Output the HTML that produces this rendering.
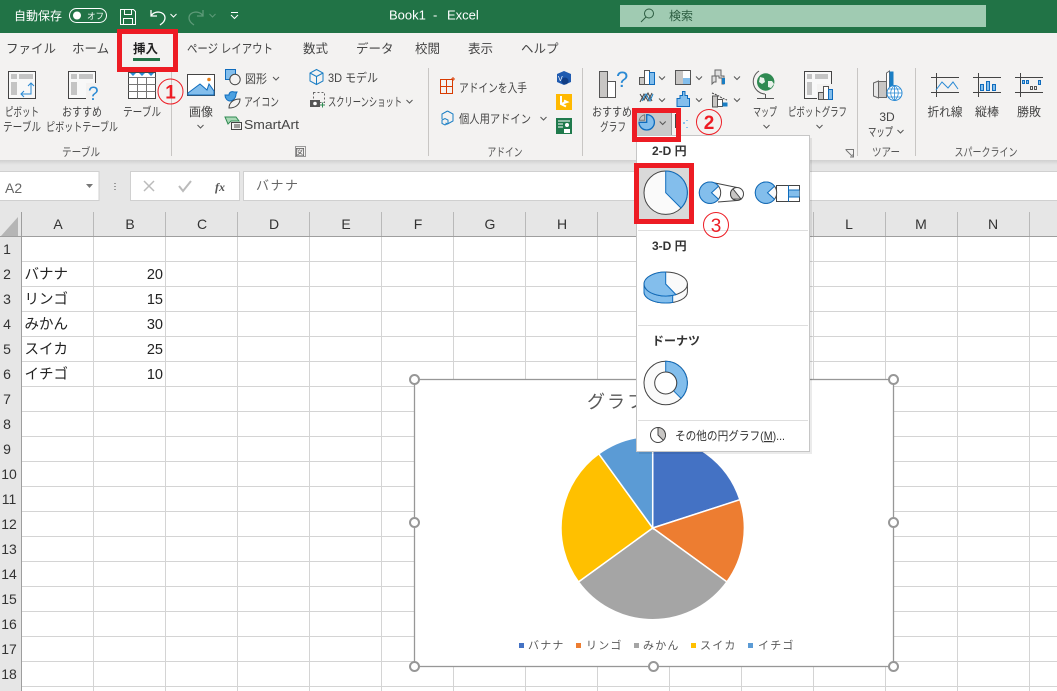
<!DOCTYPE html>
<html lang="ja"><head><meta charset="utf-8"><title>Book1 - Excel</title>
<style>
html,body{margin:0;padding:0;background:#fff;overflow:hidden}
svg{display:block;font-family:"Liberation Sans","Noto Sans CJK JP",sans-serif}
.t{font-size:12px;fill:#444}
.c{font-size:12px;fill:#444;text-anchor:middle}
.s{font-size:11.5px;fill:#555;text-anchor:middle}
.tab{font-size:12.5px;fill:#444}
.h{font-size:14px;fill:#333;text-anchor:middle}
.cell{font-size:14.5px;fill:#222}
.num{font-size:14.5px;fill:#222;text-anchor:end}
.lg{font-size:11px;fill:#595959;letter-spacing:1.2px}
.g{fill:none;stroke:#d4d4d4;stroke-width:1}
.chev{fill:none;stroke:#555;stroke-width:1}
.hd{fill:#fff;stroke:#979797;stroke-width:2}
.ic{fill:#fff;stroke:#444;stroke-width:1}
.gy{fill:#c8c6c4;stroke:#555;stroke-width:1}
.bl{fill:#83beec;stroke:#0f6cbd;stroke-width:1}
.red{fill:none;stroke:#ed1c24;stroke-width:5}
.rc{fill:none;stroke:#ed1c24;stroke-width:1}
.m{font-size:12px;font-weight:bold;fill:#333}
</style></head><body>
<svg width="1057" height="691" viewBox="0 0 1057 691" xmlns="http://www.w3.org/2000/svg">
<defs><linearGradient id="sh" x1="0" y1="0" x2="0" y2="1"><stop offset="0" stop-color="#d0d0d0"/><stop offset="1" stop-color="#e6e6e6"/></linearGradient></defs>

<!-- title bar -->
<rect width="1057" height="33" fill="#217346"/>
<text x="14" y="20" font-size="12" fill="#fff">自動保存</text>
<rect x="69.500" y="8.500" width="37" height="14" rx="7" fill="none" stroke="#fff"/>
<circle cx="77" cy="15.500" r="4" fill="#fff"/>
<text x="87" y="19" font-size="8.500" fill="#fff">オフ</text>
<g fill="none" stroke="#fff" stroke-width="1"><path d="M120.500 9.500h13l2 2v13h-15zM124.500 9.500v5h7v-5M123.500 24.500v-6h9v6"/></g>
<path d="M151 10v6h6M151 16c3-6 14-5 14 2 0 3-2 5-5 7" fill="none" stroke="#fff" stroke-width="1.300"/>
<path d="M170.500 14l3 3 3-3" fill="none" stroke="#fff"/>
<path d="M203 10v6h-6M203 16c-3-6-14-5-14 2 0 3 2 5 5 7" fill="none" stroke="#5d9a78" stroke-width="1.300"/>
<path d="M209.500 14l3 3 3-3" fill="none" stroke="#5d9a78"/>
<path d="M231 12.500h7M231 15l3.500 3.500 3.500-3.500" fill="none" stroke="#fff"/>
<text x="389" y="19.500" font-size="13" fill="#fff">Book1</text><text x="433" y="19.500" font-size="13" fill="#fff">-</text><text x="447" y="19.500" font-size="13" fill="#fff">Excel</text>
<rect x="620" y="5" width="366" height="22" fill="#a0cbb2"/>
<circle cx="649" cy="13.500" r="4.500" fill="none" stroke="#2b5c40"/><path d="M646 17l-5 5" stroke="#2b5c40" fill="none"/>
<text x="669" y="20" font-size="12" fill="#2b5c40">検索</text>

<!-- ribbon -->
<rect y="33" width="1057" height="127" fill="#f3f2f1"/>
<rect y="160" width="1057" height="52" fill="#e6e6e6"/>
<rect y="160" width="1057" height="5" fill="url(#sh)"/>
<text class="tab" x="6" y="53">ファイル</text>
<text class="tab" x="72" y="53">ホーム</text>
<text class="tab" x="133" y="53" font-weight="bold" style="fill:#222">挿入</text>
<rect x="133" y="58" width="27" height="3" fill="#217346"/>
<text class="tab" x="187" y="53" textLength="86" lengthAdjust="spacingAndGlyphs">ページ レイアウト</text>
<text class="tab" x="303" y="53">数式</text>
<text class="tab" x="356" y="53">データ</text>
<text class="tab" x="415" y="53">校閲</text>
<text class="tab" x="468" y="53">表示</text>
<text class="tab" x="521" y="53">ヘルプ</text>

<g stroke="#c8c6c4" stroke-width="1"><path d="M171.500 68v88M428.500 68v88M582.500 68v88M857.500 68v88M915.500 68v88"/></g>

<!-- table group -->
<rect class="ic" x="8.500" y="71.500" width="27" height="27" style="fill:#f8f8f8"/>
<path fill="#c4c4c4" d="M11 74h6v5h-6zM19 74h14v5H19zM11 82h6v13h-6z"/>
<path d="M21 94h10V83M28 86l3-3 3 3M24 91l-3 3 3 3" fill="none" stroke="#2a8ad4" stroke-width="1"/>
<text class="t" x="5" y="116" textLength="34" lengthAdjust="spacingAndGlyphs">ピボット</text>
<text class="t" x="3" y="131" textLength="38" lengthAdjust="spacingAndGlyphs">テーブル</text>
<rect class="ic" x="68.500" y="71.500" width="27" height="27" style="fill:#f8f8f8"/>
<path fill="#c4c4c4" d="M71 74h6v5h-6zM79 74h14v5H79zM71 82h6v13h-6z"/>
<rect x="86" y="83" width="14" height="18" fill="#f3f2f1"/>
<text x="88" y="100" font-size="19" fill="#2a8ad4">?</text>
<text class="t" x="62" y="116" textLength="40" lengthAdjust="spacingAndGlyphs">おすすめ</text>
<text class="t" x="46" y="131" textLength="72" lengthAdjust="spacingAndGlyphs">ピボットテーブル</text>
<rect x="128.500" y="72.500" width="27" height="26" fill="#fff" stroke="#444"/>
<path d="M128.500 77.500h27M128.500 84.500h27M128.500 91.500h27M137.500 77.500v21M146.500 77.500v21" stroke="#777" fill="none"/>
<path fill="#2a8ad4" d="M130 73h6l-3 3zM139 73h6l-3 3zM148 73h6l-3 3z"/>
<text class="t" x="123" y="116" textLength="38" lengthAdjust="spacingAndGlyphs">テーブル</text>
<text class="s" x="81" y="156" textLength="38" lengthAdjust="spacingAndGlyphs">テーブル</text>

<!-- image group -->
<rect x="187.500" y="74.500" width="27" height="21" fill="#fff" stroke="#444"/>
<path d="M188 93l12-9 7 6 2-6 5 7v4h-26z" fill="#83beec" stroke="#0f6cbd"/>
<circle cx="209" cy="79.500" r="1.800" fill="#e8801a"/>
<text class="c" x="201" y="116" textLength="24" lengthAdjust="spacingAndGlyphs">画像</text>
<path class="chev" d="M197.500 125l3 3 3-3"/>
<rect x="225.500" y="69.500" width="10" height="10" fill="#83beec" stroke="#0f6cbd"/>
<circle cx="235" cy="79.500" r="5.200" fill="#f3f2f1" stroke="#444"/>
<text class="t" x="245" y="83" textLength="22" lengthAdjust="spacingAndGlyphs">図形</text>
<path class="chev" d="M273 77l3 3 3-3"/>
<path d="M225 95l4 0c0-3 3-4 5-3l3 0-1 2c0 4-3 7-6 7-3 0-5-3-5-6z" fill="#4ba0e0" stroke="#0f6cbd"/>
<path d="M229 108c0-5 4-9 11-9 0 6-5 9-11 9z" fill="#f3f2f1" stroke="#444"/>
<text class="t" x="244" y="106" textLength="35" lengthAdjust="spacingAndGlyphs">アイコン</text>
<path d="M225 117h11l3 4h-8l-3 3z" fill="#a9d8b6" stroke="#2f8a52"/>
<rect x="231.500" y="122.500" width="10" height="7" fill="#f3f2f1" stroke="#444"/>
<path d="M234 125h6M234 127h6" stroke="#444" fill="none"/>
<text x="244" y="129" font-size="13" fill="#444" textLength="55" lengthAdjust="spacingAndGlyphs">SmartArt</text>
<path d="M316.500 69.500l6.500 3.500v8l-6.500 3.500-6.500-3.500v-8z M310 73l6.500 3.500 6.500-3.500M316.500 76.500v8" fill="none" stroke="#1a7ec4"/>
<text class="t" x="328" y="82" textLength="50" lengthAdjust="spacingAndGlyphs">3D モデル</text>
<rect x="313.500" y="92.500" width="11" height="10" fill="none" stroke="#666" stroke-dasharray="2 2"/>
<rect x="310" y="100" width="10" height="7" fill="#555"/><circle cx="315" cy="103.500" r="1.800" fill="#fff"/>
<path d="M320 105h5M322.500 102.500v5" stroke="#2f8a52" fill="none"/>
<text class="t" x="328" y="106" textLength="74" lengthAdjust="spacingAndGlyphs">スクリーンショット</text>
<path class="chev" d="M406.500 100l3 3 3-3"/>
<text class="s" x="300" y="156" style="font-size:9.500px">図</text>
<rect x="295.500" y="146.500" width="10" height="10" fill="none" stroke="#999"/>

<!-- add-ins -->
<path d="M440.500 79.500h12v14h-12zM446.500 79.500v14M440.500 86.500h12M453 77v4M451 79h4" fill="none" stroke="#d83b01"/>
<text class="t" x="459" y="92" textLength="68" lengthAdjust="spacingAndGlyphs">アドインを入手</text>
<path d="M447.500 111l5.500 3v7l-5.500 3-2-1 M442 120l3-1.500 3 1.500v3.500l-3 1.500-3-1.500z M442 119v-5l5.500-3" fill="none" stroke="#1a7ec4"/>
<text class="t" x="459" y="123" textLength="72" lengthAdjust="spacingAndGlyphs">個人用アドイン</text>
<path class="chev" d="M540.500 117l3 3 3-3"/>
<path d="M557 74l7-3 7 3v8l-7 3-7-3z" fill="#1f5bb0"/><circle cx="565" cy="81" r="3.500" fill="#123e85"/>
<text x="558" y="81" font-size="7" fill="#fff">V</text>
<rect x="556" y="94" width="16" height="16" fill="#ffb900"/>
<path d="M561 96v8l5 2.500M561 104l6-2-3-1.500" fill="none" stroke="#fff" stroke-width="2"/>
<rect x="556" y="118" width="16" height="16" fill="#1f7a4c"/>
<path d="M558 121h12M558 124h5M558 127h5" stroke="#fff" fill="none"/><circle cx="567" cy="125" r="2" fill="#fff"/><path d="M564 133v-4h6v4z" fill="#fff"/>
<text class="s" x="505" y="156" textLength="35" lengthAdjust="spacingAndGlyphs">アドイン</text>

<!-- chart group -->
<rect x="599.500" y="71.500" width="8" height="26" class="gy"/>
<rect x="607.500" y="81.500" width="8" height="16" fill="#fff" stroke="#555"/>
<text x="616" y="87" font-size="22" fill="#2a8ad4">?</text>
<text class="c" x="612" y="116" textLength="40" lengthAdjust="spacingAndGlyphs">おすすめ</text>
<text class="c" x="613" y="131" textLength="26" lengthAdjust="spacingAndGlyphs">グラフ</text>
<rect x="639.500" y="77.500" width="5" height="7" fill="#c8c6c4" stroke="#555"/>
<rect x="644.500" y="70.500" width="5" height="14" fill="#fff" stroke="#555"/>
<rect x="649.500" y="72.500" width="5" height="12" fill="#83beec" stroke="#0f6cbd"/>
<path class="chev" d="M659 76.500l3 3 3-3"/>
<rect x="675.500" y="70.500" width="15" height="14" fill="#fff" stroke="#555"/>
<rect x="676" y="71" width="7" height="13" fill="#c8c6c4"/><rect x="683" y="78" width="7" height="6" fill="#83beec"/>
<path class="chev" d="M696 76.500l3 3 3-3"/>
<path d="M712 84v-8h3v-6h6v6h3v8h-2v-6h-3v-2h-3v6h-2z" fill="#e0e0e0" stroke="#666"/><rect x="722" y="78" width="3" height="6" fill="#1a7ec4"/>
<path class="chev" d="M734 76.500l3 3 3-3"/>
<path d="M640 102l4-8 4 7 4-8M640 94l4 6 4-7 4 8" fill="none" stroke="#444"/><path d="M642 101l4-7 4 7 3-7" fill="none" stroke="#1a7ec4"/>
<path class="chev" d="M659 98.500l3 3 3-3"/>
<path d="M677 106.500v-8h3v-3h2.500v-4h2.500v4h2.500v3h2v8z" fill="#83beec" stroke="#0f6cbd"/>
<path class="chev" d="M696 98.500l3 3 3-3"/>
<path d="M712.500 107v-11h5v11z" fill="#c8c6c4" stroke="#555"/><rect x="717.500" y="99.500" width="5" height="7" fill="#fff" stroke="#555"/><rect x="722.500" y="102.500" width="5" height="4" fill="#1a7ec4"/>
<path d="M712 93l5 2 5 3 5 2" fill="none" stroke="#444" stroke-dasharray="2 1"/>
<path class="chev" d="M734 98.500l3 3 3-3"/>
<!-- pie button -->
<rect x="636" y="112" width="36" height="25" fill="#c9c9c9"/>
<path d="M671.500 112v25" stroke="#9a9a9a" fill="none"/>
<path d="M646.700 114.600V122.300H639A7.700 7.700 0 1 0 646.700 114.600Z" fill="#83beec" stroke="#0f6cbd" stroke-width="1.300"/>
<path d="M644.700 120.300V114.800A7 7 0 0 0 639.200 120.300Z" fill="#c8c6c4" stroke="#777"/>
<path class="chev" d="M659.700 121.500l3 3 3-3"/>
<path d="M675.500 114v14" stroke="#444" fill="none"/>
<path d="M684 122v2M687 120v1M687 127v1" stroke="#8cc4ee" stroke-width="2" fill="none"/>
<circle cx="765.700" cy="82" r="8.700" fill="#2f8a52"/><path d="M760 77l4 1 1 4-3 2-3-2zM768 81l4 0 2 3-3 4-3-1z" fill="#e8f1ea"/>
<path d="M759 71a12.500 12.500 0 0 0 6 23M765.500 94v4M757 98.500h17" fill="none" stroke="#555"/>
<text class="c" x="765" y="116" textLength="24" lengthAdjust="spacingAndGlyphs">マップ</text>
<path class="chev" d="M763.500 125l3 3 3-3"/>
<rect x="804.500" y="71.500" width="27" height="27" fill="#f8f8f8" stroke="#444"/>
<path fill="#c4c4c4" d="M807 74h5v5h-5zM815 74h13v5h-13zM807 82h5v13h-5z"/>
<rect x="817" y="84" width="17" height="16" fill="#f3f2f1"/>
<rect x="818.500" y="92.500" width="5" height="7" fill="#c8c6c4" stroke="#555"/><rect x="823.500" y="86.500" width="5" height="13" fill="#fff" stroke="#555"/><rect x="828.500" y="89.500" width="4" height="10" fill="#83beec" stroke="#0f6cbd"/>
<text class="t" x="788" y="116" textLength="59" lengthAdjust="spacingAndGlyphs">ピボットグラフ</text>
<path class="chev" d="M816.500 125l3 3 3-3"/>
<path d="M845.500 149.500h8v8M846 150l6 6M853 154v3h-3" fill="none" stroke="#777"/>

<!-- 3D map -->
<path d="M873.500 83l5-2v17l-5-2z" fill="#e8e8e8" stroke="#666"/>
<rect x="878.500" y="81.500" width="8" height="16" fill="#c8c6c4" stroke="#666"/>
<path d="M886.500 73l3-2v25h-3z" fill="#fff" stroke="#666"/>
<rect x="889.500" y="71.500" width="4" height="25" fill="#1a7ec4"/>
<circle cx="894.500" cy="93" r="7.500" fill="#fff" stroke="#2a8ad4"/>
<path d="M887 93h15M894.500 85.500v15M888.500 89h12M888.500 97h12M894.500 85.500c-5 4-5 11 0 15M894.500 85.500c5 4 5 11 0 15" fill="none" stroke="#2a8ad4" stroke-width=".8"/>
<text class="c" x="887" y="121">3D</text>
<text class="t" x="868" y="136" textLength="25" lengthAdjust="spacingAndGlyphs">マップ</text>
<path class="chev" d="M897.500 130l3 3 3-3"/>
<text class="s" x="886" y="156" textLength="28" lengthAdjust="spacingAndGlyphs">ツアー</text>

<!-- sparklines -->
<g fill="none" stroke="#444">
<path d="M931 77.500h28M931 92.500h28M936.500 73v24"/>
<path d="M973 77.500h28M973 92.500h28M978.500 73v24"/>
<path d="M1015 77.500h28M1015 92.500h28M1020.500 73v24"/>
</g>
<path d="M936 90l6-8 6 6 5-6 5 7" fill="none" stroke="#2a8ad4"/>
<path fill="#83beec" stroke="#0f6cbd" d="M980.500 84.500h3v6h-3zM986.500 81.500h3v9h-3zM992.500 84.500h3v6h-3z"/>
<path fill="#83beec" stroke="#0f6cbd" d="M1022.500 80.500h2v3h-2zM1026.500 80.500h2v3h-2zM1038.500 80.500h2v4h-2z"/>
<path fill="none" stroke="#555" d="M1030.500 86.500h2v3h-2zM1034.500 86.500h2v3h-2z"/>
<text class="c" x="945" y="116" textLength="35" lengthAdjust="spacingAndGlyphs">折れ線</text>
<text class="c" x="987" y="116" textLength="24" lengthAdjust="spacingAndGlyphs">縦棒</text>
<text class="c" x="1029" y="116" textLength="24" lengthAdjust="spacingAndGlyphs">勝敗</text>
<text class="s" x="986" y="156" textLength="63" lengthAdjust="spacingAndGlyphs">スパークライン</text>

<!-- formula bar -->
<rect x="-1" y="171.500" width="100" height="29" fill="#fff" stroke="#d0d0d0"/>
<text x="5" y="193" font-size="14" fill="#666">A2</text>
<path d="M86 184h7l-3.500 4z" fill="#777"/>
<path d="M115 183v1M115 186v1M115 189v1" stroke="#999" stroke-width="2" fill="none"/>
<rect x="130.500" y="171.500" width="109" height="29" fill="#fff" stroke="#d0d0d0"/>
<path d="M144 181l10 10M154 181l-10 10" stroke="#bbb" stroke-width="1.500" fill="none"/>
<path d="M179 186l4 5 8-10" stroke="#bbb" stroke-width="2" fill="none"/>
<text x="215" y="191" font-size="12" font-family="Liberation Serif" font-style="italic" font-weight="bold" fill="#555">fx</text>
<rect x="243.500" y="171.500" width="820" height="29" fill="#fff" stroke="#d0d0d0"/>
<text x="256" y="190" font-size="13" fill="#666" letter-spacing="1.500">バナナ</text>

<!-- grid -->
<rect x="0" y="212" width="1057" height="479" fill="#fff"/>
<rect x="0" y="212" width="1057" height="24" fill="#e6e6e6"/>
<rect x="0" y="236" width="22" height="455" fill="#e6e6e6"/>
<path d="M1 236l17-19v19z" fill="#b5b5b5"/>
<path class="g" d="M93.500 236V691M165.500 236V691M237.500 236V691M309.500 236V691M381.500 236V691M453.500 236V691M525.500 236V691M597.500 236V691M669.500 236V691M741.500 236V691M813.500 236V691M885.500 236V691M957.500 236V691M1029.500 236V691"/>
<path class="g" d="M22 261.500H1057M22 286.500H1057M22 311.500H1057M22 336.500H1057M22 361.500H1057M22 386.500H1057M22 411.500H1057M22 436.500H1057M22 461.500H1057M22 486.500H1057M22 511.500H1057M22 536.500H1057M22 561.500H1057M22 586.500H1057M22 611.500H1057M22 636.500H1057M22 661.500H1057M22 686.500H1057"/>
<path d="M93.500 212v24M165.500 212v24M237.500 212v24M309.500 212v24M381.500 212v24M453.500 212v24M525.500 212v24M597.500 212v24M669.500 212v24M741.500 212v24M813.500 212v24M885.500 212v24M957.500 212v24M1029.500 212v24" stroke="#b9b9b9" fill="none"/>
<path d="M0 236.500H1057M21.500 212V691" stroke="#9e9e9e" fill="none"/>
<g class="h"><text class="h" x="58" y="229">A</text><text class="h" x="130" y="229">B</text><text class="h" x="202" y="229">C</text><text class="h" x="274" y="229">D</text><text class="h" x="346" y="229">E</text><text class="h" x="418" y="229">F</text><text class="h" x="490" y="229">G</text><text class="h" x="562" y="229">H</text><text class="h" x="849" y="229">L</text><text class="h" x="921" y="229">M</text><text class="h" x="993" y="229">N</text></g>
<text class="h" x="7" y="254">1</text><text class="h" x="7" y="279">2</text><text class="h" x="7" y="304">3</text><text class="h" x="7" y="329">4</text><text class="h" x="7" y="354">5</text><text class="h" x="7" y="379">6</text><text class="h" x="7" y="404">7</text><text class="h" x="7" y="429">8</text><text class="h" x="7" y="454">9</text><text class="h" x="9" y="479">10</text><text class="h" x="9" y="504">11</text><text class="h" x="9" y="529">12</text><text class="h" x="9" y="554">13</text><text class="h" x="9" y="579">14</text><text class="h" x="9" y="604">15</text><text class="h" x="9" y="629">16</text><text class="h" x="9" y="654">17</text><text class="h" x="9" y="679">18</text>
<text class="cell" x="24.500" y="279">バナナ</text><text class="num" x="163" y="279">20</text>
<text class="cell" x="24.500" y="304">リンゴ</text><text class="num" x="163" y="304">15</text>
<text class="cell" x="24.500" y="329">みかん</text><text class="num" x="163" y="329">30</text>
<text class="cell" x="24.500" y="354">スイカ</text><text class="num" x="163" y="354">25</text>
<text class="cell" x="24.500" y="379">イチゴ</text><text class="num" x="163" y="379">10</text>

<!-- chart -->
<rect x="414.500" y="379.500" width="479" height="287" fill="#fff" stroke="#979797" stroke-width="1.300"/>
<text x="587" y="408" font-size="18" fill="#595959" letter-spacing="2">グラフ タイトル</text>
<g stroke="#fff" stroke-width="1.500">
<path d="M652.700 528V436.300A91.700 91.700 0 0 1 739.900 499.700Z" fill="#4472c4"/>
<path d="M652.700 528L739.900 499.700A91.700 91.700 0 0 1 726.900 581.900Z" fill="#ed7d31"/>
<path d="M652.700 528L726.900 581.900A91.700 91.700 0 0 1 578.500 581.900Z" fill="#a5a5a5"/>
<path d="M652.700 528L578.500 581.900A91.700 91.700 0 0 1 598.800 453.800Z" fill="#ffc000"/>
<path d="M652.700 528L598.800 453.800A91.700 91.700 0 0 1 652.700 436.300Z" fill="#5b9bd5"/>
</g>
<rect x="519" y="643" width="5" height="5" fill="#4472c4"/><text class="lg" x="528" y="649">バナナ</text>
<rect x="576" y="643" width="5" height="5" fill="#ed7d31"/><text class="lg" x="586" y="649">リンゴ</text>
<rect x="634" y="643" width="5" height="5" fill="#a5a5a5"/><text class="lg" x="643" y="649">みかん</text>
<rect x="691" y="643" width="5" height="5" fill="#ffc000"/><text class="lg" x="700" y="649">スイカ</text>
<rect x="748" y="643" width="5" height="5" fill="#5b9bd5"/><text class="lg" x="758" y="649">イチゴ</text>
<circle class="hd" cx="414.500" cy="379.500" r="4.500"/><circle class="hd" cx="893.500" cy="379.500" r="4.500"/>
<circle class="hd" cx="414.500" cy="522.500" r="4.500"/><circle class="hd" cx="893.500" cy="522.500" r="4.500"/>
<circle class="hd" cx="414.500" cy="666.500" r="4.500"/><circle class="hd" cx="653.500" cy="666.500" r="4.500"/><circle class="hd" cx="893.500" cy="666.500" r="4.500"/>

<!-- dropdown menu -->
<rect x="639" y="138" width="173" height="316" fill="#000" opacity=".08"/>
<rect x="636.500" y="135.500" width="173" height="316" fill="#fff" stroke="#c6c6c6"/>
<text class="m" x="652" y="155">2-D 円</text>
<rect x="636" y="165" width="56" height="57" fill="#d9d9d9"/>
<circle cx="665.700" cy="192.700" r="21.700" fill="#fafafa" stroke="#444"/>
<path d="M665.700 171V192.700L681 208A21.700 21.700 0 0 0 665.700 171Z" fill="#83beec" stroke="#0f6cbd"/>
<!-- pie of pie -->
<path d="M710 182L737 187.500M718 202L737 200.500" stroke="#444" fill="none"/>
<circle cx="710" cy="192.700" r="10.700" fill="#fafafa" stroke="#444"/>
<path d="M718.500 186.200L711.500 192.700L718.500 199.200A10.700 10.700 0 1 1 718.500 186.200Z" fill="#83beec" stroke="#0f6cbd"/>
<circle cx="737" cy="194" r="6.500" fill="#fafafa" stroke="#444"/>
<path d="M737 194L733 188.900A6.500 6.500 0 0 0 733 199.100L741 199Z" fill="#c8c6c4" stroke="#444"/>
<!-- bar of pie -->
<rect x="776.500" y="185.500" width="23" height="16" fill="#fff" stroke="#444"/>
<rect x="788.500" y="190" width="11" height="7" fill="#83beec"/>
<path d="M788.500 185.500v16M788.500 190h11M788.500 197h11" stroke="#0f6cbd" fill="none"/>
<circle cx="766" cy="192.700" r="10.700" fill="#fafafa" stroke="#444"/>
<path d="M774.500 186.200L767.500 192.700L774.500 199.200A10.700 10.700 0 1 1 774.500 186.200Z" fill="#83beec" stroke="#0f6cbd"/>
<path d="M638 230.500H808M638 325.500H808M638 420.500H808" stroke="#dedede" fill="none"/>
<text class="m" x="652" y="250">3-D 円</text>
<!-- 3D pie -->
<path d="M644 284v8c0 6.500 10 11 21.700 11s21.700-4.500 21.700-11v-8z" fill="#fafafa" stroke="#444"/>
<path d="M644 284v8c0 6.500 10 11 21.700 11 2.500 0 5-.2 7-.6v-8z" fill="#83beec" stroke="#0f6cbd"/>
<ellipse cx="665.700" cy="284" rx="21.700" ry="12" fill="#fafafa" stroke="#444"/>
<path d="M665.700 272V284L676 294.600A21.700 12 0 1 1 665.700 272Z" fill="#83beec" stroke="#0f6cbd"/>
<text class="m" x="652" y="345">ドーナツ</text>
<!-- donut -->
<circle cx="665.700" cy="383" r="21.700" fill="#fafafa" stroke="#444"/>
<path d="M665.700 361.300A21.700 21.700 0 0 1 681 398.300L673.500 390.800A11 11 0 0 0 665.700 372Z" fill="#83beec" stroke="#0f6cbd"/>
<circle cx="665.700" cy="383" r="11" fill="#fff" stroke="#444"/>
<circle cx="658" cy="435" r="7.500" fill="#fff" stroke="#444"/>
<path d="M658 427.500V435L663.300 440.300A7.500 7.500 0 0 0 658 427.500Z" fill="#c8c6c4" stroke="#444"/>
<text x="675" y="440" font-size="12" fill="#333" textLength="110" lengthAdjust="spacingAndGlyphs">その他の円グラフ(<tspan text-decoration="underline">M</tspan>)...</text>

<!-- annotations -->
<rect class="red" x="119.500" y="31.500" width="56" height="38"/>
<rect class="red" x="634.500" y="110.500" width="44" height="29"/>
<rect class="red" x="636.500" y="165.500" width="55" height="56"/>
<circle class="rc" cx="170.500" cy="91.500" r="12.500"/><text x="170.500" y="98.500" font-size="19" font-weight="bold" fill="#ed1c24" text-anchor="middle">1</text>
<circle class="rc" cx="709" cy="122" r="12.500"/><text x="709" y="129" font-size="19" font-weight="bold" fill="#ed1c24" text-anchor="middle">2</text>
<circle class="rc" cx="716" cy="225" r="12.500"/><text x="716" y="232" font-size="19" fill="#ed1c24" text-anchor="middle">3</text>
</svg>
</body></html>
